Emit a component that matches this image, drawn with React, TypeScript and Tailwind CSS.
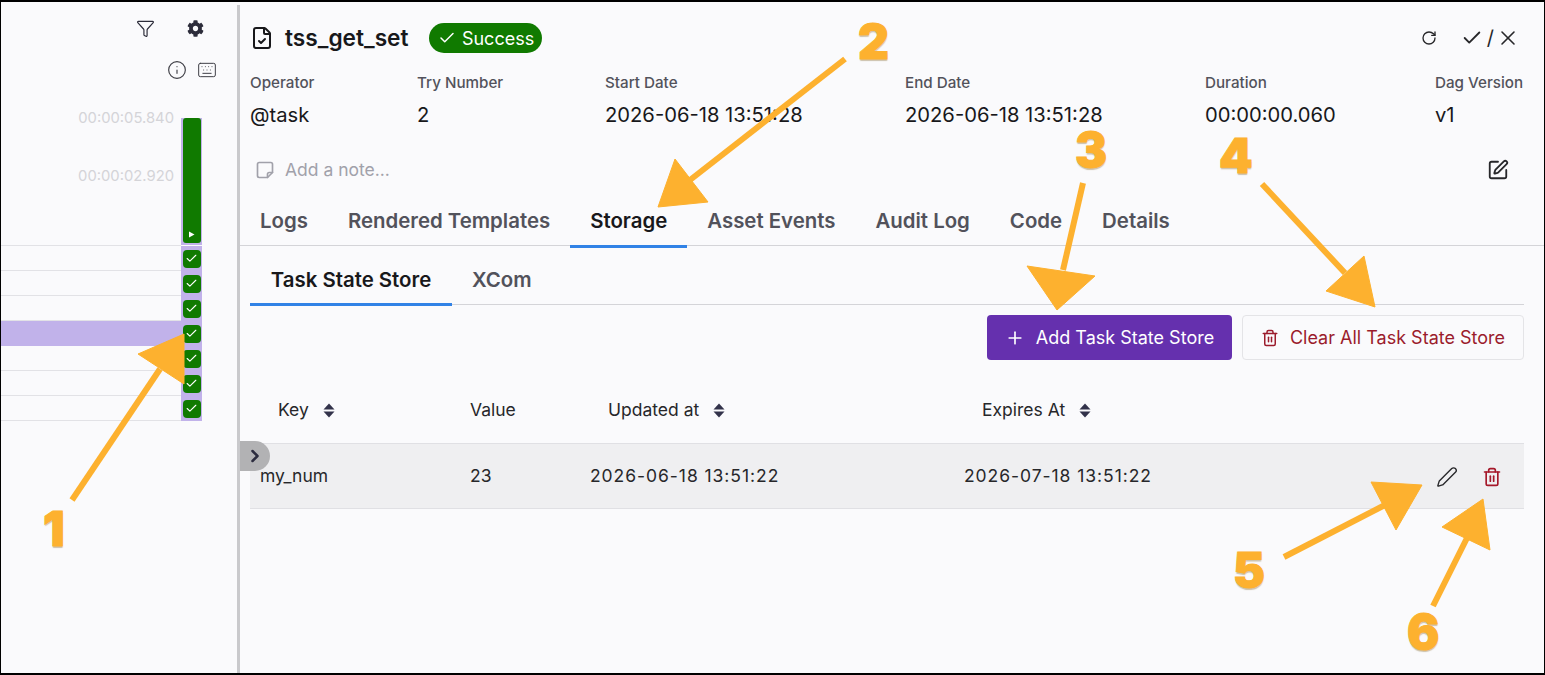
import { Check, ChevronRight, FileCheck, Funnel, Info, Keyboard, Pen, Plus, RotateCw, SquarePen, Trash2, X } from "lucide-react";
import { FaCog } from "react-icons/fa";

const META = [
  { label: "Operator", value: "@task" },
  { label: "Try Number", value: "2" },
  { label: "Start Date", value: "2026-06-18 13:51:28" },
  { label: "End Date", value: "2026-06-18 13:51:28" },
  { label: "Duration", value: "00:00:00.060" },
  { label: "Dag Version", value: "v1" },
];

const TABS = ["Logs", "Rendered Templates", "Storage", "Asset Events", "Audit Log", "Code", "Details"];

const ROWS = [false, false, false, true, false, false, false];

// annotation arrows: shaft from tail to neck, then the head triangle
const ARROWS = [
  { tail: [72, 500], neck: [160, 369], head: "184,334 138,354 184,384" },
  { tail: [845, 59], neck: [690, 180], head: "658,207 675,159 708,202" },
  { tail: [1083, 183], neck: [1063, 270], head: "1057,310 1027,266 1095,276" },
  { tail: [1262, 184], neck: [1345, 273], head: "1375,307 1326,291 1364,256" },
  { tail: [1284, 557], neck: [1385, 505], head: "1422,485 1371,482 1396,530" },
  { tail: [1433, 606], neck: [1467, 538], head: "1483,499 1442,527 1490,550" },
];

const NUMBERS = [
  { n: "1", className: "left-[42px] top-[507px]" },
  { n: "2", className: "left-[857px] top-[20px]" },
  { n: "3", className: "left-[1074px] top-[128px]" },
  { n: "4", className: "left-[1218px] top-[134px]" },
  { n: "5", className: "left-[1232px] top-[548px]" },
  { n: "6", className: "left-[1406px] top-[610px]" },
];

function SortIcon() {
  return (
    <svg width="12" height="15" viewBox="0 0 12 15" className="ml-[14px] text-[#32324a]" fill="currentColor">
      <path d="M6 0.5 11.5 6.5H0.5Z" />
      <path d="M6 14.5 0.5 8.5h11Z" />
    </svg>
  );
}

function GanttColumn() {
  return (
    <div className="w-[236px] shrink-0 flex flex-col">
      <div className="h-[52px] flex items-center justify-end">
        <Funnel className="w-[19px] h-[19px] mr-[32px] text-[#2c2c3a]" strokeWidth={1.5} />
        <FaCog className="w-[17px] h-[17px] mr-[33px] text-[#2c2c3a]" />
      </div>
      <div className="h-[32px] flex items-center justify-end">
        <Info className="w-[20px] h-[20px] mr-[10px] text-[#3f3f46]" strokeWidth={1.4} />
        <Keyboard className="w-[20px] h-[20px] mr-[20px] text-[#3f3f46]" strokeWidth={1.2} />
      </div>
      <div className="h-[160px] flex">
        <div className="flex-1 border-b border-[#e2e2e6] flex flex-col items-end pt-[22px] pr-[7px] text-[14.8px] leading-[20px] text-[#d4d4d8]">
          <span className="mb-[38px]">00:00:05.840</span>
          <span>00:00:02.920</span>
        </div>
        <div className="w-[21px] mr-[35px] mt-[32px] h-[127px] bg-[#c1b2ea] flex justify-center shrink-0">
          <div className="w-[18px] h-[125px] bg-[#107a00] rounded-[3px] flex items-end justify-center pb-[5px]">
            <svg width="7" height="7" viewBox="0 0 7 7" fill="white">
              <path d="M1 0.5 6.5 3.5 1 6.5Z" />
            </svg>
          </div>
        </div>
      </div>
      {ROWS.map((active, i) => (
        <div key={i} className="h-[25px] flex">
          <div className={`flex-1 ${active ? "bg-[#c1b2ea]" : "border-b border-[#e2e2e6]"}`} />
          <div className="w-[21px] mr-[35px] bg-[#c1b2ea] flex items-center justify-center shrink-0">
            <div className="w-[18px] h-[18px] rounded-[4px] bg-[#107a00] flex items-center justify-center">
              <Check className="w-[13px] h-[13px] text-white" strokeWidth={2} />
            </div>
          </div>
        </div>
      ))}
    </div>
  );
}

function TaskPanel() {
  return (
    <div className="flex-1 min-w-0 flex flex-col">
      <div className="h-[71px] flex items-center pl-[10px] pr-[24px] pt-[1px]">
        <FileCheck className="w-[24px] h-[24px] text-[#18181b] mr-[11px]" strokeWidth={2} />
        <h1 className="text-[22.7px] font-semibold text-[#18181b] mr-[20px]">tss_get_set</h1>
        <span className="h-[30px] w-[113px] rounded-full bg-[#107a00] text-white text-[18px] flex items-center justify-center gap-[6px] pl-[2px]">
          <Check className="w-[18px] h-[18px]" strokeWidth={2} />
          Success
        </span>
        <div className="ml-auto flex items-center text-[#27272a]">
          <RotateCw className="w-[16px] h-[16px] mr-[24px]" strokeWidth={2} />
          <Check className="w-[22px] h-[22px]" strokeWidth={2} />
          <span className="ml-[4px] mr-[2px] text-[20px] leading-none">/</span>
          <X className="w-[24px] h-[24px]" strokeWidth={1.6} />
        </div>
      </div>
      <div className="grid grid-cols-[167px_188px_300px_300px_230px_1fr] pl-[10px]">
        {META.map((m) => (
          <div key={m.label} className="flex flex-col">
            <span className="text-[15.2px] leading-[20px] font-medium text-[#52525b]">{m.label}</span>
            <span className="mt-[8px] text-[20.2px] leading-[28px] text-[#18181b]">{m.value}</span>
          </div>
        ))}
      </div>
      <div className="h-[52px] mt-[15px] flex items-center pl-[15px] pr-[35px] text-[#a1a1aa] text-[17.5px]">
        <svg viewBox="0 0 24 24" className="w-[20px] h-[20px] mr-[10px]" fill="none" stroke="currentColor" strokeWidth="2" strokeLinecap="round" strokeLinejoin="round">
          <path d="M5 3h14a2 2 0 0 1 2 2v10l-6 6H5a2 2 0 0 1-2-2V5a2 2 0 0 1 2-2z" />
          <path d="M15 21v-4a2 2 0 0 1 2-2h4" />
        </svg>
        Add a note...
        <SquarePen className="w-[22px] h-[22px] ml-auto text-[#27272a]" strokeWidth={2} />
      </div>
      <div className="flex h-[50px] border-b border-[#d4d4d8]">
        {TABS.map((t) => (
          <div
            key={t}
            className={`px-[20px] flex items-center text-[20.4px] font-semibold h-[52px] ${
              t === "Storage" ? "text-[#18181b] border-b-[3px] border-[#3182e6] pt-[2px]" : "text-[#52525b] pt-[2px] pb-[3px]"
            }`}
          >
            {t}
          </div>
        ))}
      </div>
      <div className="pl-[10px] pr-[20px] flex flex-col">
        <div className="flex h-[59px] items-end border-b border-[#d4d4d8]">
          <div className="h-[52px] w-[202px] pt-[3px] flex items-center justify-center text-[20.4px] font-semibold text-[#18181b] border-b-[3px] border-[#3182e6] mb-[-2px] shrink-0">
            Task State Store
          </div>
          <div className="h-[52px] px-[20px] pt-[3px] pb-[3px] mb-[-2px] flex items-center text-[20.4px] font-semibold text-[#52525b]">XCom</div>
        </div>
        <div className="flex justify-end gap-[10px] mt-[10px]">
          <button className="h-[45px] w-[245px] rounded-[4px] bg-[#6530ae] text-white text-[18px] flex items-center justify-center gap-[11px]">
            <Plus className="w-[20px] h-[20px]" strokeWidth={2} />
            Add Task State Store
          </button>
          <button className="h-[45px] w-[282px] rounded-[4px] border border-[#e4e4e7] text-[#9b1c2c] text-[18px] flex items-center justify-center gap-[11px]">
            <Trash2 className="w-[18px] h-[18px]" strokeWidth={2} />
            Clear All Task State Store
          </button>
        </div>
        <div className="grid grid-cols-[210px_120px_374px_1fr] h-[83px] pt-[18px] items-center text-[#27272a] text-[17.5px]">
          <div className="pl-[28px] flex items-center">Key<SortIcon /></div>
          <div className="pl-[10px]">Value</div>
          <div className="pl-[28px] flex items-center">Updated at<SortIcon /></div>
          <div className="pl-[28px] flex items-center">Expires At<SortIcon /></div>
        </div>
        <div className="grid grid-cols-[210px_120px_374px_1fr] h-[66px] items-center bg-[#efeff1] border-y border-[#e0e0e4] text-[17.5px] text-[#27272a] pt-[1px]">
          <div className="pl-[10px]">my_num</div>
          <div className="pl-[10px]">23</div>
          <div className="pl-[10px] tracking-[0.95px]">2026-06-18 13:51:22</div>
          <div className="pl-[10px] flex items-center">
            <span className="tracking-[0.95px]">2026-07-18 13:51:22</span>
            <Pen className="w-[22px] h-[22px] ml-auto mr-[24px] text-[#27272a]" strokeWidth={1.5} />
            <Trash2 className="w-[20px] h-[20px] mr-[22px] text-[#a5182a]" strokeWidth={2} />
          </div>
        </div>
      </div>
    </div>
  );
}

export default function App() {
  return (
    <div className="relative w-[1545px] h-[675px] overflow-hidden bg-[#fafafc] border-x border-t-2 border-b-2 border-black font-['Inter',sans-serif] flex">
      <GanttColumn />
      <div className="w-[3px] mt-[3px] shrink-0 bg-[#c9c9cc]" />
      <TaskPanel />

      <div className="absolute left-[239px] top-[439px] w-[30px] h-[30px] rounded-r-full bg-[#b2b2b4] flex items-center justify-center text-[#2c2c3f]">
        <ChevronRight className="w-[20px] h-[20px]" strokeWidth={3} />
      </div>

      <svg className="absolute left-[-1px] top-[-2px] pointer-events-none" width="1545" height="675">
        {ARROWS.map((a, i) => (
          <g key={i} fill="#fdb12f" stroke="#fdb12f">
            <line x1={a.tail[0]} y1={a.tail[1]} x2={a.neck[0]} y2={a.neck[1]} strokeWidth="6" />
            <polygon points={a.head} strokeWidth="1" />
          </g>
        ))}
      </svg>
      {NUMBERS.map((d) => (
        <span
          key={d.n}
          className={`absolute text-[48px] leading-[40px] font-black text-[#fdb12f] [-webkit-text-stroke:1px_#fdb12f] [text-shadow:0_2px_1px_rgba(120,90,20,0.35)] ${d.className}`}
        >
          {d.n}
        </span>
      ))}
    </div>
  );
}
